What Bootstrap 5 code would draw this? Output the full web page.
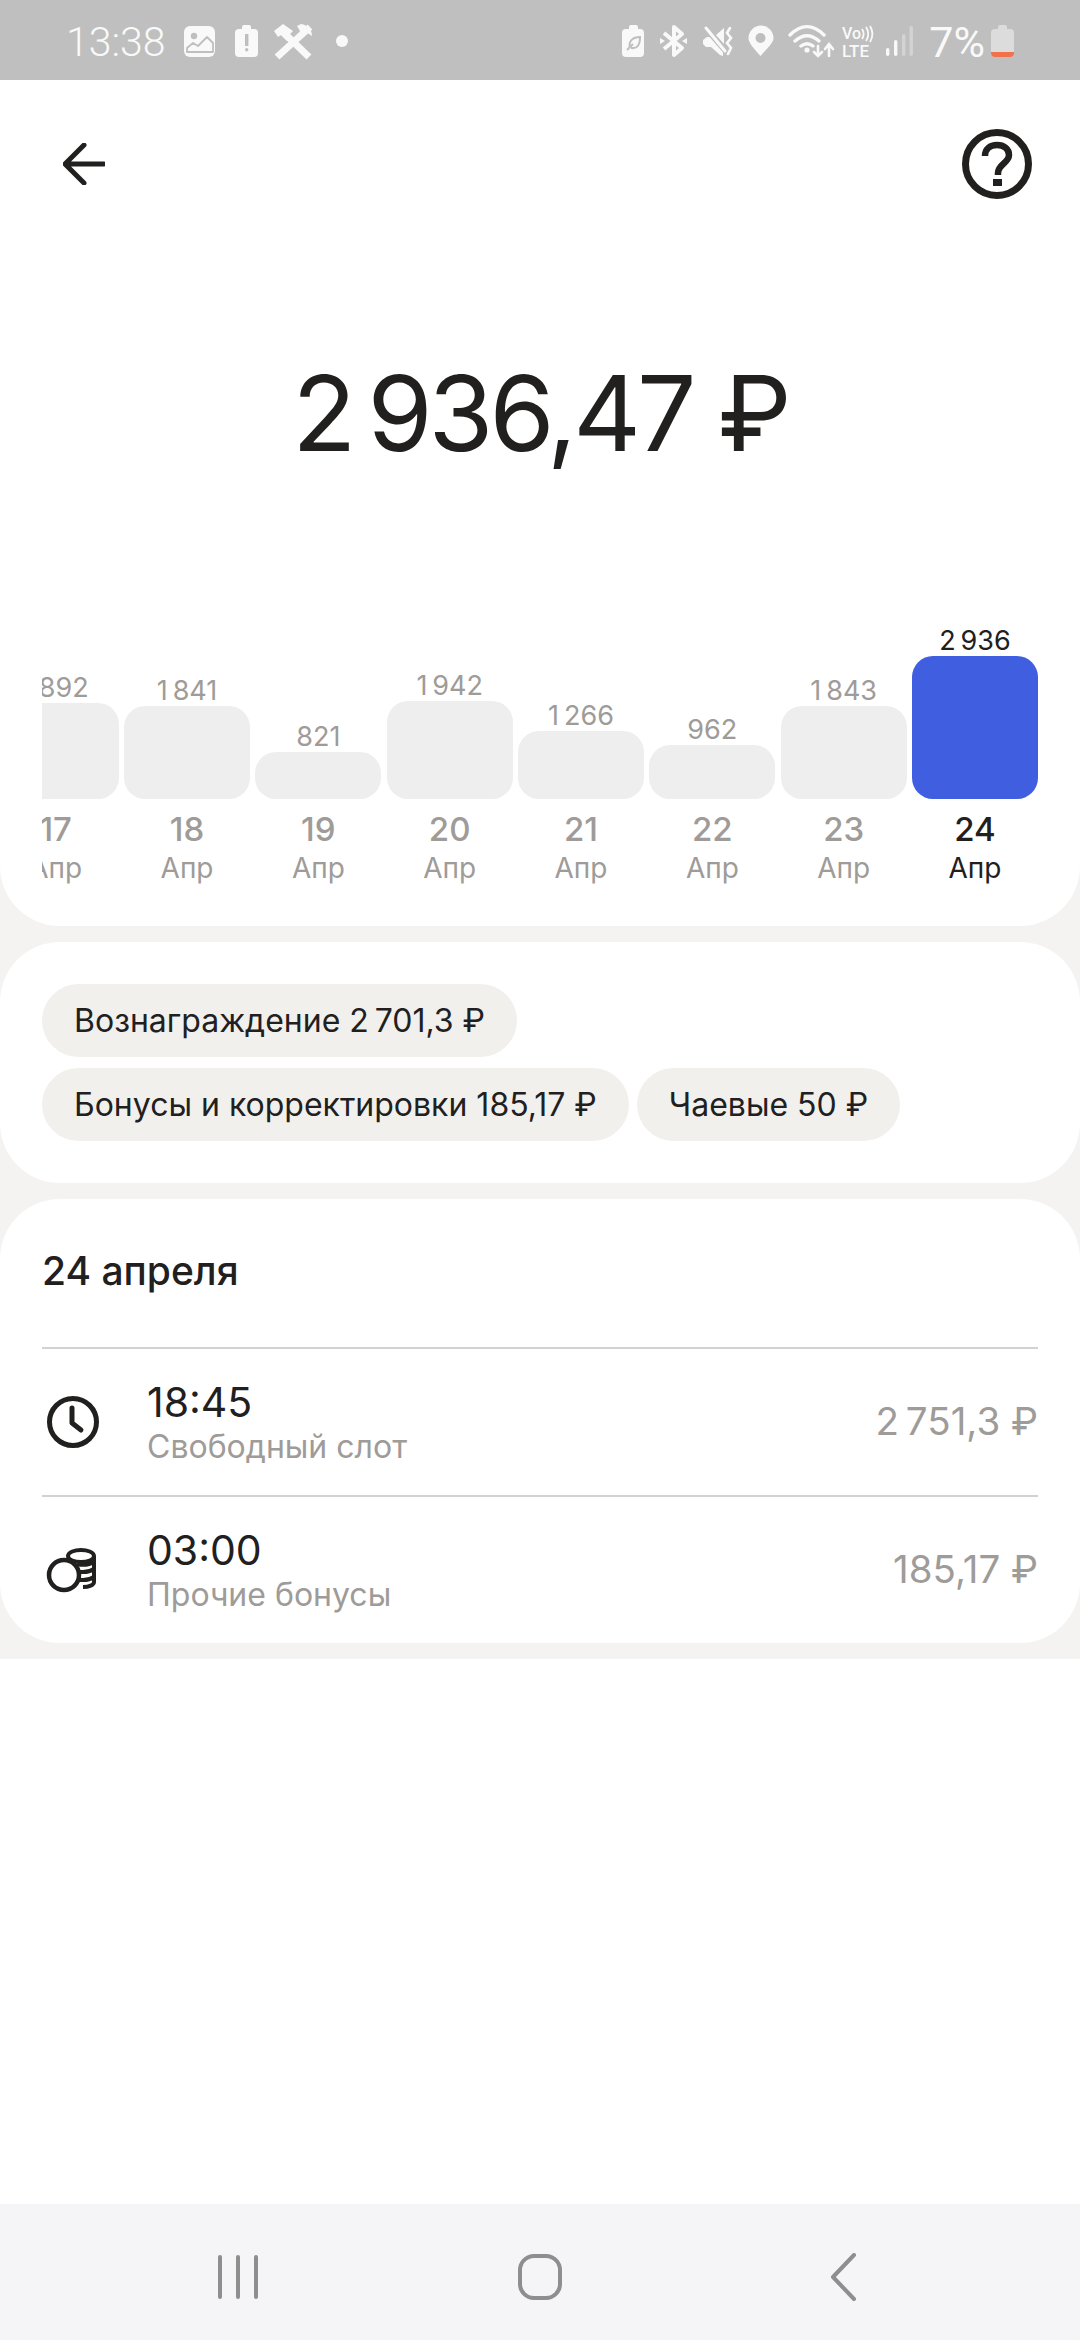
<!DOCTYPE html>
<html lang="ru">
<head>
<meta charset="UTF-8">
<meta name="viewport" content="width=device-width, initial-scale=1.0">
<title>Доход за день</title>
<link href="https://cdn.jsdelivr.net/npm/bootstrap@5.3.0/dist/css/bootstrap.min.css" rel="stylesheet">
<script src="https://cdn.jsdelivr.net/npm/bootstrap@5.3.0/dist/js/bootstrap.bundle.min.js"></script>
<style>
    body {
        font-family: Inter, "Noto Sans", sans-serif;
        color: #21201f;
        width: 1080px;
        height: 2340px;
        overflow: hidden;
    }
    .status-bar {
        height: 80px;
        background: #bfbfbf;
        color: #f9f9f9;
        padding: 0 66px;
    }
    .status-time {
        font-family: Roboto, sans-serif;
        font-weight: 300;
        font-size: 41px;
        line-height: 40px;
        margin: 22px 18px 0 0;
    }
    .status-icons { margin-top: 22px; }
    .status-pct {
        font-family: Roboto, sans-serif;
        font-size: 43px;
        line-height: 40px;
        margin: 22px 6px 0 15px;
    }
    .top-card {
        background: #fff;
        border-radius: 0 0 60px 60px;
        padding-bottom: 41px;
        margin-bottom: 16px;
    }
    .top-bar {
        height: 168px;
        padding: 0 48px 0 63px;
    }
    .total-sum {
        font-size: 105px;
        line-height: 130px;
        letter-spacing: -4px;
        margin: 100px 0 148px;
    }
    .day-chart {
        margin: 0 42px;
        gap: 5.33px;
        overflow: hidden;
    }
    .day-col {
        flex: 0 0 126px;
        color: #9e9b98;
    }
    .day-sum {
        font-size: 27px;
        line-height: 30px;
        white-space: nowrap;
    }
    .day-bar {
        background: #eeeeee;
        border-radius: 21px;
    }
    .day-num {
        font-size: 33px;
        font-weight: 500;
        line-height: 40px;
        margin-top: 10px;
    }
    .day-month {
        font-size: 28px;
        line-height: 34px;
        margin-top: 2px;
    }
    .day-col.is-active { color: #21201f; }
    .day-col.is-active .day-bar { background: #3f5fe0; }
    .gray-area {
        background: #f4f3f1;
        padding-bottom: 16px;
    }
    .white-card {
        background: #fff;
        border-radius: 60px;
    }
    .chips-card {
        padding: 42px;
        margin-bottom: 16px;
        gap: 11px 8px;
    }
    .sum-chip {
        background: #f1f0ed;
        border-radius: 37px;
        height: 73px;
        line-height: 73px;
        padding: 0 32px;
        font-size: 32px;
        white-space: nowrap;
    }
    .list-card { padding: 0 42px; }
    .list-title {
        height: 148px;
        padding-bottom: 4px;
        font-size: 39px;
        font-weight: 500;
    }
    .list-row {
        height: 148px;
        border-top: 2px solid #d2d2d2;
    }
    .row-icon { width: 60px; margin-right: 45px; }
    .row-time { font-size: 41px; line-height: 50px; }
    .row-note { font-size: 32px; line-height: 40px; color: #9e9b98; }
    .row-sum { font-size: 38.5px; color: #9e9b98; }
    .sys-nav {
        height: 136px;
        background: #f5f5f7;
        padding: 9px 87px 0;
    }
    .sys-nav svg { display: block; }
</style>
</head>
<body class="d-flex flex-column">

<div class="status-bar d-flex flex-shrink-0 align-items-start">
    <div class="status-time">13:38</div>
    <svg class="status-icons" width="170" height="46" viewBox="182 32 170 46">
        <rect x="182" y="36" width="31" height="31" rx="6" fill="#f9f9f9"/>
        <circle cx="192" cy="46" r="3.200" fill="#bfbfbf"/>
        <path d="M185 58l6-5 5 3 9-9 6 6v9h-26z" fill="#f9f9f9" stroke="#bfbfbf" stroke-width="1.800" stroke-linejoin="round"/>
        <rect x="233" y="39" width="23" height="28" rx="4" fill="#f9f9f9"/>
        <rect x="240" y="35" width="9" height="6" rx="2" fill="#f9f9f9"/>
        <rect x="243" y="44" width="3.400" height="12" fill="#bfbfbf"/>
        <rect x="243" y="58" width="3.400" height="3.400" rx="1.700" fill="#bfbfbf"/>
        <path d="M275 67L308 37" stroke="#f9f9f9" stroke-width="7"/>
        <path d="M307 67L280 41" stroke="#f9f9f9" stroke-width="7"/>
        <path d="M272 41l9-7 10 7-5 5-1 5-6-6-3 2-4-6z" fill="#f9f9f9"/>
        <path d="M310 46c0-6-4-11-11-12l-4 2 3 5-1 4 5 2 2-5z" fill="#f9f9f9"/>
        <circle cx="340" cy="51" r="6" fill="#f9f9f9"/>
    </svg>
    <svg class="status-icons ms-auto" width="292" height="46" viewBox="622 32 292 46">
        <rect x="622" y="39" width="22" height="28" rx="4" fill="#f9f9f9"/>
        <rect x="629" y="35" width="9" height="6" rx="2" fill="#f9f9f9"/>
        <path d="M627 60l6-6M630 58c-2-7 3-11 10-11 0 7-2 12-9 11" fill="none" stroke="#bfbfbf" stroke-width="2"/>
        <path d="M664 43l18 15-8 7V37l8 7-18 15" fill="none" stroke="#f9f9f9" stroke-width="4" stroke-linejoin="round"/>
        <path d="M660 48l5 3-5 3zM687 48l-5 3 5 3z" fill="#f9f9f9"/>
        <path d="M703 50l4-3h5l11 13v6l-3-1-9-8h-5l-3-3zM716 45l8-7v16z" fill="#f9f9f9"/>
        <path d="M704 39l20 23" stroke="#bfbfbf" stroke-width="2"/>
        <path d="M706 38l19 23" stroke="#f9f9f9" stroke-width="3" stroke-linecap="round"/>
        <path d="M730 38l-3 5 4 5-4 5 4 5-3 6" fill="none" stroke="#f9f9f9" stroke-width="2.600" stroke-linecap="round"/>
        <path d="M760.500 66c-7-8-12-13-12-18a12 12 0 0 1 25 0c0 5-6 10-13 18z" fill="#f9f9f9"/>
        <circle cx="760.500" cy="48" r="5" fill="#bfbfbf"/>
        <path d="M790 45c11-11 23-11 34 0M795 51c8-7 16-7 24 0M801 56c4-3 8-3 12 0" fill="none" stroke="#f9f9f9" stroke-width="3.400" stroke-linecap="round"/>
        <circle cx="807" cy="60" r="2.600" fill="#f9f9f9"/>
        <path d="M818 56v9M814 62l4 4 4-4M829 66v-11M825 59l4-5 4 5" fill="none" stroke="#f9f9f9" stroke-width="2.600" stroke-linecap="round"/>
        <text x="842" y="49" font-family="Roboto, sans-serif" font-size="16" font-weight="500" fill="#f9f9f9">Vo</text>
        <path d="M862 39c2 3 2 7 0 10M866 37c3 4 3 10 0 14M870 36c3 5 3 11 0 16" fill="none" stroke="#f9f9f9" stroke-width="1.800"/>
        <text x="842" y="67" font-family="Roboto, sans-serif" font-size="17" font-weight="500" fill="#f9f9f9">LTE</text>
        <rect x="886" y="58" width="3.400" height="8" rx="1.700" fill="#f9f9f9"/>
        <rect x="894" y="50" width="3.400" height="16" rx="1.700" fill="#f9f9f9"/>
        <rect x="902" y="44" width="3.400" height="22" rx="1.700" fill="#f9f9f9" fill-opacity=".35"/>
        <rect x="909.500" y="36" width="3.400" height="30" rx="1.700" fill="#f9f9f9" fill-opacity=".35"/>
    </svg>
    <div class="status-pct">7%</div>
    <svg class="status-icons" width="23" height="46" viewBox="991 32 23 46">
        <rect x="991" y="39" width="23" height="28" rx="4" fill="#dcdcdc"/>
        <rect x="998" y="35" width="9" height="6" rx="2" fill="#dcdcdc"/>
        <path d="M991 62h23v1a4 4 0 0 1-4 4h-15a4 4 0 0 1-4-4z" fill="#f0714a"/>
    </svg>
</div>

<div class="gray-area flex-shrink-0">
    <div class="top-card">
        <div class="top-bar d-flex justify-content-between align-items-center">
            <svg width="42" height="42" viewBox="0 0 42 42">
                <path d="M41 21H3M21 2L2 21l19 19" fill="none" stroke="#21201f" stroke-width="5" stroke-linecap="round"/>
            </svg>
            <svg width="70" height="70" viewBox="0 0 70 70">
                <circle cx="35" cy="35" r="31.500" fill="none" stroke="#21201f" stroke-width="7"/>
                <path d="M23 27c0-7 5-11 12-11s12 4 12 10c0 8-11 9-11 18v2" fill="none" stroke="#21201f" stroke-width="6.500"/>
                <rect x="31" y="50" width="9" height="7" fill="#21201f"/>
            </svg>
        </div>
        <div class="total-sum text-center">2&#8201;936,47 ₽</div>
        <div class="day-chart d-flex justify-content-end align-items-end text-center">
            <div class="day-col"><div class="day-sum">1&#8201;892</div><div class="day-bar" style="height:96px"></div><div class="day-num">17</div><div class="day-month">Апр</div></div>
            <div class="day-col"><div class="day-sum">1&#8201;841</div><div class="day-bar" style="height:93px"></div><div class="day-num">18</div><div class="day-month">Апр</div></div>
            <div class="day-col"><div class="day-sum">821</div><div class="day-bar" style="height:47px"></div><div class="day-num">19</div><div class="day-month">Апр</div></div>
            <div class="day-col"><div class="day-sum">1&#8201;942</div><div class="day-bar" style="height:98px"></div><div class="day-num">20</div><div class="day-month">Апр</div></div>
            <div class="day-col"><div class="day-sum">1&#8201;266</div><div class="day-bar" style="height:68px"></div><div class="day-num">21</div><div class="day-month">Апр</div></div>
            <div class="day-col"><div class="day-sum">962</div><div class="day-bar" style="height:54px"></div><div class="day-num">22</div><div class="day-month">Апр</div></div>
            <div class="day-col"><div class="day-sum">1&#8201;843</div><div class="day-bar" style="height:93px"></div><div class="day-num">23</div><div class="day-month">Апр</div></div>
            <div class="day-col is-active"><div class="day-sum">2&#8201;936</div><div class="day-bar" style="height:143px"></div><div class="day-num">24</div><div class="day-month">Апр</div></div>
        </div>
    </div>
    <div class="white-card chips-card d-flex flex-wrap">
        <div class="sum-chip">Вознаграждение 2&#8201;701,3 ₽</div>
        <div class="sum-chip">Бонусы и корректировки 185,17 ₽</div>
        <div class="sum-chip">Чаевые 50 ₽</div>
    </div>
    <div class="white-card list-card">
        <div class="list-title d-flex align-items-center">24 апреля</div>
        <div class="list-row d-flex align-items-center">
            <svg class="row-icon" height="54" viewBox="0 0 60 54">
                <circle cx="31" cy="27" r="23.500" fill="none" stroke="#21201f" stroke-width="5"/>
                <path d="M30 13v15l9 7" fill="none" stroke="#21201f" stroke-width="5" stroke-linecap="round" stroke-linejoin="round"/>
            </svg>
            <div class="flex-grow-1">
                <div class="row-time">18:45</div>
                <div class="row-note">Свободный слот</div>
            </div>
            <div class="row-sum">2&#8201;751,3 ₽</div>
        </div>
        <div class="list-row d-flex align-items-center">
            <svg class="row-icon" height="46" viewBox="-3 0 60 46">
                <circle cx="19" cy="28" r="15" fill="none" stroke="#21201f" stroke-width="4.500"/>
                <path d="M23 9c0-4 7-6 13-6s13 2 13 6v26c0 3-5 5-11 5M23 9c0 4 7 6 13 6s13-2 13-6M32 17c2 .5 4 .8 6 .8 4 0 8-1 11-3M35 25h3c4 0 8-1 11-3M35 33h3c4 0 8-1 11-3" fill="none" stroke="#21201f" stroke-width="4"/>
            </svg>
            <div class="flex-grow-1">
                <div class="row-time">03:00</div>
                <div class="row-note">Прочие бонусы</div>
            </div>
            <div class="row-sum">185,17 ₽</div>
        </div>
    </div>
</div>

<div class="sys-nav mt-auto d-flex flex-shrink-0 justify-content-around align-items-center">
    <svg width="46" height="48" viewBox="0 0 46 48">
        <path d="M5 4v40M23 4v40M41 4v40" stroke="#8e8e8e" stroke-width="4" stroke-linecap="round"/>
    </svg>
    <svg width="46" height="48" viewBox="0 0 46 48">
        <rect x="3" y="3" width="40" height="42" rx="14" fill="none" stroke="#8e8e8e" stroke-width="4"/>
    </svg>
    <svg width="46" height="48" viewBox="0 0 46 48">
        <path d="M35 2L14 24l21 22" fill="none" stroke="#8e8e8e" stroke-width="4" stroke-linecap="round" stroke-linejoin="round"/>
    </svg>
</div>

</body>
</html>
